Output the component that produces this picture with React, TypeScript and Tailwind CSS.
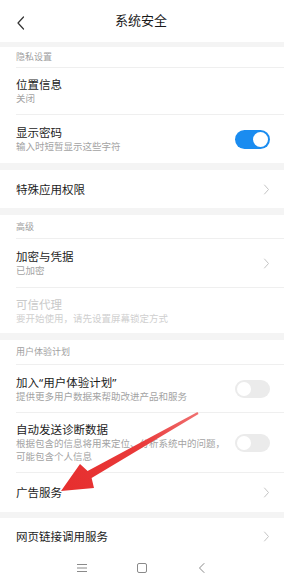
import React from 'react'

const font = { fontFamily: '"Noto Sans", "Noto Sans CJK SC", sans-serif' }

function Chevron() {
  return (
    <svg width="7" height="11" viewBox="0 0 7 11" fill="none" className="shrink-0">
      <path d="M1.5 1 L5.5 5.5 L1.5 10" stroke="#c4c4c4" strokeWidth="1" strokeLinecap="round" strokeLinejoin="round" />
    </svg>
  )
}

function Toggle({ on }: { on: boolean }) {
  return on ? (
    <div className="w-[35px] h-[19px] rounded-full bg-[#1a8cf0] flex items-center justify-end pr-[2px] shrink-0">
      <div className="w-[15px] h-[15px] rounded-full bg-white" />
    </div>
  ) : (
    <div className="w-[35px] h-[18px] rounded-full bg-[#ebebeb] flex items-center pl-[2px] shrink-0">
      <div className="w-[14px] h-[14px] rounded-full bg-white" />
    </div>
  )
}

function Band({ h }: { h: string }) {
  return <div className={`bg-[#f4f4f4] ${h}`} />
}

function Label({ text, h }: { text: string; h: string }) {
  return (
    <div className="pl-4">
      <div className={`${h} border-b border-[#efefef] flex items-center text-[9px] text-[#a0a0a0]`}>{text}</div>
    </div>
  )
}

type RowProps = {
  title: string
  sub?: React.ReactNode
  h: string
  right?: React.ReactNode
  line?: boolean
  dim?: boolean
}

function Row({ title, sub, h, right, line = true, dim = false }: RowProps) {
  return (
    <div className="pl-4">
      <div className={`${h} ${line ? 'border-b border-[#efefef]' : ''} flex items-center justify-between pr-[14px]`}>
        <div className="flex flex-col">
          <span className={`text-[11.5px] leading-[15px] ${dim ? 'text-[#c9c9c9]' : 'text-[#1c1c1c]'}`}>{title}</span>
          {sub && (
            <span className={`text-[9.5px] leading-[13px] ${dim ? 'text-[#cfcfcf]' : 'text-[#a3a3a3]'}`}>{sub}</span>
          )}
        </div>
        {right}
      </div>
    </div>
  )
}

export default function App() {
  return (
    <div className="relative w-[284px] h-[581px] bg-white overflow-hidden" style={font}>
      {/* Header */}
      <div className="h-[42px] flex items-center relative">
        <svg width="10" height="14" viewBox="0 0 10 14" fill="none" className="absolute left-[16px] top-[16px]">
          <path d="M7.5 1 L2 7 L7.5 13" stroke="#333" strokeWidth="1.2" strokeLinecap="round" strokeLinejoin="round" />
        </svg>
        <div className="flex-1 text-center text-[13px] text-[#1a1a1a] pr-[2px]">系统安全</div>
      </div>
      <Band h="h-[5px]" />

      <Label text="隐私设置" h="h-[21px]" />
      <Row title="位置信息" sub="关闭" h="h-[47px]" />
      <Row title="显示密码" sub="输入时短暂显示这些字符" h="h-[48px]" line={false} right={<Toggle on />} />
      <Band h="h-[7px]" />
      <Row title="特殊应用权限" h="h-[38px]" line={false} right={<Chevron />} />
      <Band h="h-[7px]" />

      <Label text="高级" h="h-[24px]" />
      <Row title="加密与凭据" sub="已加密" h="h-[49px]" right={<Chevron />} />
      <Row title="可信代理" sub="要开始使用，请先设置屏幕锁定方式" h="h-[45px]" line={false} dim />
      <Band h="h-[7px]" />

      <Label text="用户体验计划" h="h-[25px]" />
      <Row title="加入“用户体验计划”" sub="提供更多用户数据来帮助改进产品和服务" h="h-[48px]" right={<Toggle on={false} />} />
      <Row
        title="自动发送诊断数据"
        sub={
          <>
            根据包含的信息将用来定位、分析系统中的问题，
            <br />
            可能包含个人信息
          </>
        }
        h="h-[60px]"
        right={<Toggle on={false} />}
      />
      <Row title="广告服务" h="h-[39px]" line={false} right={<Chevron />} />
      <Band h="h-[6px]" />
      <Row title="网页链接调用服务" h="h-[36px]" line={false} right={<Chevron />} />

      {/* Navigation bar */}
      <div className="h-[27px] flex items-center justify-center gap-[48px]">
        <svg width="12" height="10" viewBox="0 0 12 10" fill="none">
          <path d="M1 1.5 H11 M1 5 H11 M1 8.5 H11" stroke="#8a8a8a" strokeWidth="1" />
        </svg>
        <svg width="12" height="12" viewBox="0 0 12 12" fill="none">
          <rect x="1.5" y="1.5" width="9" height="9" rx="1.5" stroke="#8a8a8a" strokeWidth="1" />
        </svg>
        <svg width="12" height="12" viewBox="0 0 12 12" fill="none">
          <path d="M8 1.5 L3.5 6 L8 10.5" stroke="#8a8a8a" strokeWidth="1" strokeLinecap="round" strokeLinejoin="round" />
        </svg>
      </div>

      {/* Red annotation arrow */}
      <svg className="absolute left-0 top-0 pointer-events-none" width="284" height="581" viewBox="0 0 284 581">
        <defs>
          <linearGradient id="arrowGrad" x1="198" y1="413" x2="61" y2="491" gradientUnits="userSpaceOnUse">
            <stop offset="0" stopColor="#f07070" />
            <stop offset="0.4" stopColor="#e93a3a" />
            <stop offset="1" stopColor="#e62e2e" />
          </linearGradient>
        </defs>
        <polygon
          points="61,491 94,488 91.6,478 198.5,413.9 197.5,412.1 87.6,471 80,464"
          fill="url(#arrowGrad)"
        />
      </svg>
    </div>
  )
}
